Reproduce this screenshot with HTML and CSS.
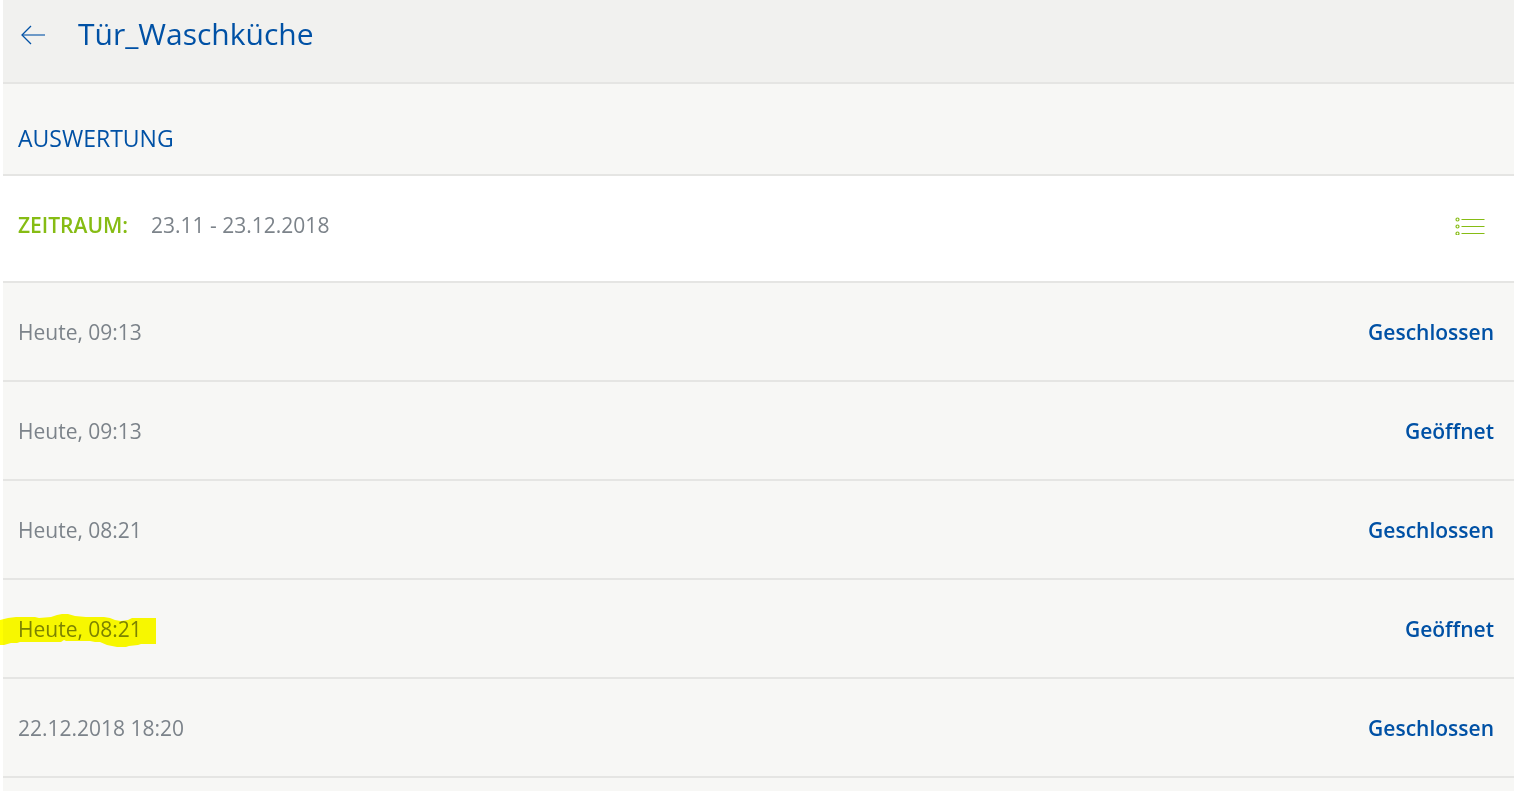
FILE: index.html
```html
<!DOCTYPE html>
<html lang="de">
<head>
<meta charset="utf-8">
<title>Tür_Waschküche</title>
<link rel="stylesheet" href="styles.css">
</head>
<body>
<div class="page">
  <header class="header">
    <button class="back" type="button" aria-label="Zurück">
      <svg width="24" height="22" viewBox="0 -2 24 22" fill="none" stroke="#0051a5"><path d="M10 1L1 10L10 19" stroke-width="1.3"/><path d="M1 10H24" stroke-opacity=".55" stroke-width="2"/></svg>
    </button>
    <h1 class="title">Tür_Waschküche</h1>
  </header>
  <main>
    <h2 class="section">AUSWERTUNG</h2>
    <div class="period">
      <span class="period-label">ZEITRAUM:</span>
      <span class="period-value">23.11 - 23.12.2018</span>
      <button class="list-button" type="button" aria-label="Liste">
        <svg width="30" height="20" viewBox="0 -2 30 20" fill="none" stroke="#86bc14"><g stroke-width="1.2"><circle cx="2.5" cy="2.5" r="1.5"/><circle cx="2.5" cy="9.5" r="1.5"/><circle cx="2.5" cy="16.5" r="1.5"/></g><path d="M6.5 2.5H29.5M6.5 9.5H29.5M6.5 16.5H29.5" stroke-width="1.2"/></svg>
      </button>
    </div>
    <ul class="events">
      <li class="event"><span class="time">Heute, 09:13</span><span class="state">Geschlossen</span></li>
      <li class="event"><span class="time">Heute, 09:13</span><span class="state">Geöffnet</span></li>
      <li class="event"><span class="time">Heute, 08:21</span><span class="state">Geschlossen</span></li>
      <li class="event">
        <span class="time">Heute, 08:21</span><span class="state">Geöffnet</span>
        <svg class="marker" width="156" height="34" viewBox="0 0 156 34" fill="#ffff00"><path d="M0 6L8 4L16 3H35L39 4L51 3L57 1L62 0H68L75 2L86 3H104L110 4L115 6L121 7L128 6L132 4H156V30H141L138 31L129 32L126 33H117L107 31L100 28H95L90 27H66L64 26L61 28H20L17 29H11L4 31H0Z"/></svg>
      </li>
      <li class="event"><span class="time">22.12.2018 18:20</span><span class="state">Geschlossen</span></li>
    </ul>
  </main>
</div>
</body>
</html>
```
FILE: styles.css
```css
* {
  box-sizing: border-box;
}

body {
  margin: 0;
  background: #fff;
  font-family: "Open Sans", "Noto Sans", sans-serif;
}

.page {
  min-height: 100vh;
  margin-left: 3px;
  background: #f7f7f5;
  color: #7c838a;
  font-size: 21px;
  line-height: 28px;
}

.header {
  display: flex;
  align-items: center;
  gap: 33px;
  padding: 14px 18px 28px;
  border-bottom: 2px solid #e5e5e3;
  background: #f1f1ef;
  color: #0051a5;
}

.back,
.list-button {
  display: flex;
  padding: 0;
  border: 0;
  background: none;
  cursor: pointer;
}

.title {
  margin: 0;
  font-size: 30px;
  font-weight: 400;
  line-height: 40px;
}

.section {
  margin: 0;
  padding: 38px 15px 20px;
  border-bottom: 2px solid #e5e5e3;
  color: #0051a5;
  font-size: 23px;
  font-weight: 500;
  line-height: 32px;
}

.period {
  display: flex;
  align-items: center;
  gap: 23px;
  padding: 35px 29px 42px 15px;
  border-bottom: 2px solid #e5e5e3;
  background: #fff;
}

.period-label {
  color: #86bc14;
  font-weight: 600;
}

.list-button {
  margin-left: auto;
}

.events {
  margin: 0;
  padding: 0;
  list-style: none;
}

.event {
  position: relative;
  display: flex;
  justify-content: space-between;
  padding: 35px 20px 34px 15px;
  border-bottom: 2px solid #e5e5e3;
}

.state {
  color: #0051a5;
  font-weight: 600;
}

.marker {
  position: absolute;
  top: 34px;
  left: -3px;
  mix-blend-mode: multiply;
}
```
